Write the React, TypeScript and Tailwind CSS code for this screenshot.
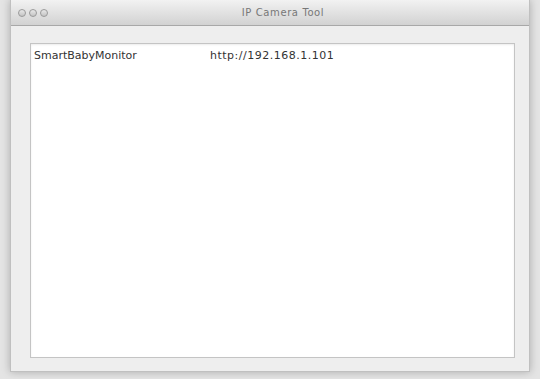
import React from "react";

const Light = () => (
  <span className="block w-[8px] h-[8px] rounded-full border border-[#9a9a9a] bg-gradient-to-b from-[#e8e8e8] to-[#c4c4c4]" />
);

export default function App() {
  return (
    <div className="w-[540px] h-[379px] bg-[#e4e4e4] pl-[10px] pr-[10px] pb-[7px] font-['Lucida_Grande','DejaVu_Sans',sans-serif]">
      <div className="h-full flex flex-col bg-[#eeeeee] border border-t-0 border-[#c0c0c0] shadow-[0_0_8px_rgba(0,0,0,0.25)]">
        {/* Title bar */}
        <div className="relative h-[26px] shrink-0 flex items-center bg-gradient-to-b from-[#f2f2f2] to-[#d2d2d2] border-b border-[#a8a8a8]">
          <div className="flex items-center gap-[3px] pl-[7px]">
            <Light />
            <Light />
            <Light />
          </div>
          <div className="absolute inset-0 flex items-center justify-center text-[10px] tracking-[0.6px] text-[#777] pl-[26px]">
            IP Camera Tool
          </div>
        </div>
        {/* Content */}
        <div className="flex-1 flex flex-col pl-[19px] pr-[14px] pt-[17px] pb-[13px]">
          <div className="flex-1 bg-white border border-[#c4c4c4] shadow-[inset_0_1px_2px_rgba(0,0,0,0.08)]">
            <div className="flex items-center h-[24px] text-[11px] text-[#333] pl-[3px]">
              <span className="w-[176px]">SmartBabyMonitor</span>
              <span className="tracking-[0.5px]">http://192.168.1.101</span>
            </div>
          </div>
        </div>
      </div>
    </div>
  );
}
